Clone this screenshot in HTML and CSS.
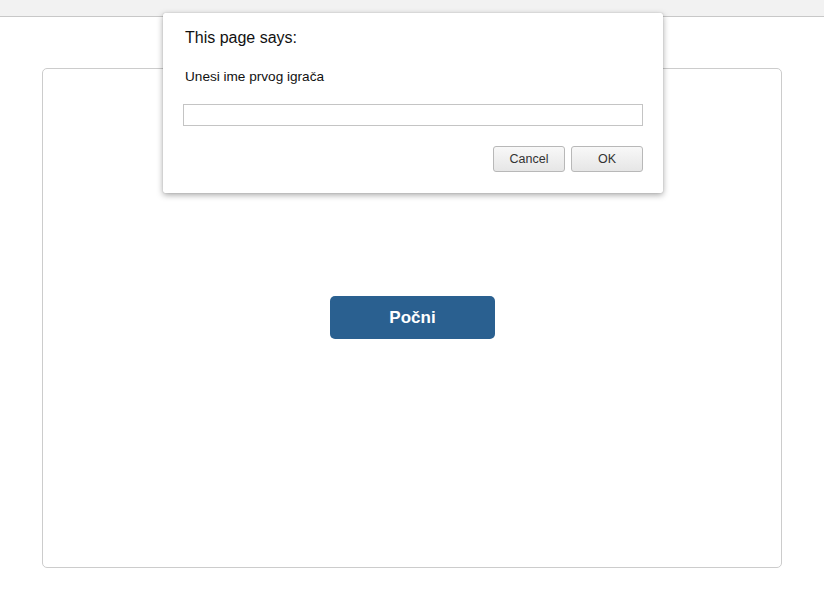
FILE: index.html
```html
<!DOCTYPE html>
<html>
<head>
<meta charset="utf-8">
<link rel="stylesheet" href="styles.css">
</head>
<body>
<div class="topbar"></div>
<main class="card">
  <button class="start">Počni</button>
</main>
<div class="dialog">
  <div class="dialog-title">This page says:</div>
  <div class="dialog-msg">Unesi ime prvog igrača</div>
  <input class="dialog-input" type="text">
  <div class="dialog-actions">
    <button class="dbtn">Cancel</button>
    <button class="dbtn">OK</button>
  </div>
</div>
</body>
</html>
```
FILE: styles.css
```css
html, body {
  margin: 0;
  padding: 0;
  background: #ffffff;
  font-family: "Liberation Sans", Arial, sans-serif;
}
.topbar {
  height: 16px;
  background: #f2f2f2;
  border-bottom: 1px solid #c8c8c8;
}
.card {
  margin: 51px 0 0 42px;
  width: 738px;
  height: 498px;
  border: 1px solid #cccccc;
  border-radius: 5px;
  display: flex;
  align-items: center;
  justify-content: center;
}
.start {
  width: 165px;
  height: 43px;
  margin-left: 1px;
  margin-top: -1px;
  background: #2a6090;
  color: #ffffff;
  border: none;
  border-radius: 5px;
  font-family: "Liberation Sans", Arial, sans-serif;
  font-weight: bold;
  font-size: 17px;
  padding: 0;
}
.dialog {
  position: absolute;
  left: 163px;
  top: 13px;
  width: 500px;
  height: 180px;
  box-sizing: border-box;
  background: #ffffff;
  border-radius: 2px;
  box-shadow: 0 2px 6px rgba(0,0,0,0.35), 0 0 1px rgba(0,0,0,0.3);
  padding: 16px 20px 0 20px;
  display: flex;
  flex-direction: column;
}
.dialog-title {
  font-size: 16px;
  color: #111;
  margin-left: 2px;
  line-height: 18px;
}
.dialog-msg {
  font-size: 13.6px;
  color: #111;
  margin: 22px 0 0 2px;
  line-height: 16px;
}
.dialog-input {
  margin: 19px 0 0 0;
  width: 460px;
  height: 22px;
  box-sizing: border-box;
  border: 1px solid #c4c4c4;
  padding: 0 4px;
  outline: none;
}
.dialog-actions {
  display: flex;
  justify-content: flex-end;
  gap: 6px;
  margin-top: 20px;
}
.dbtn {
  width: 72px;
  height: 26px;
  box-sizing: border-box;
  border: 1px solid #b8b8b8;
  border-radius: 3px;
  background: linear-gradient(#f8f8f8, #e6e6e6);
  font-family: "Liberation Sans", Arial, sans-serif;
  font-size: 12.5px;
  color: #333;
  padding: 0;
}
```
